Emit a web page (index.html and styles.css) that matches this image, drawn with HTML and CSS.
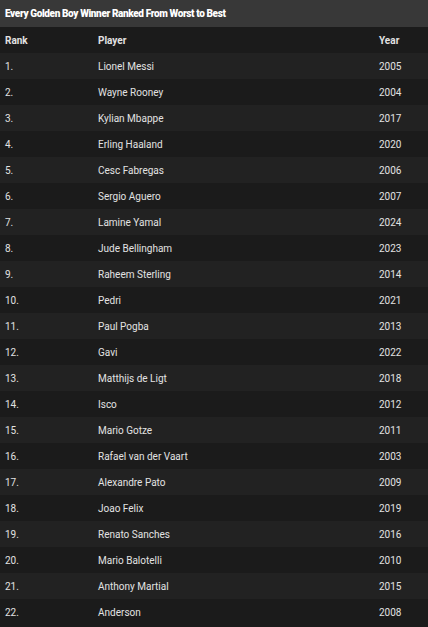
FILE: index.html
```html
<!DOCTYPE html>
<html>
<head>
<meta charset="utf-8">
<link rel="stylesheet" href="styles.css">
</head>
<body>
<div class="table">
  <div class="title">Every Golden Boy Winner Ranked From Worst to Best</div>
  <div class="row head"><span>Rank</span><span>Player</span><span>Year</span></div>
  <div class="row"><span>1.</span><span>Lionel Messi</span><span>2005</span></div>
  <div class="row"><span>2.</span><span>Wayne Rooney</span><span>2004</span></div>
  <div class="row"><span>3.</span><span>Kylian Mbappe</span><span>2017</span></div>
  <div class="row"><span>4.</span><span>Erling Haaland</span><span>2020</span></div>
  <div class="row"><span>5.</span><span>Cesc Fabregas</span><span>2006</span></div>
  <div class="row"><span>6.</span><span>Sergio Aguero</span><span>2007</span></div>
  <div class="row"><span>7.</span><span>Lamine Yamal</span><span>2024</span></div>
  <div class="row"><span>8.</span><span>Jude Bellingham</span><span>2023</span></div>
  <div class="row"><span>9.</span><span>Raheem Sterling</span><span>2014</span></div>
  <div class="row"><span>10.</span><span>Pedri</span><span>2021</span></div>
  <div class="row"><span>11.</span><span>Paul Pogba</span><span>2013</span></div>
  <div class="row"><span>12.</span><span>Gavi</span><span>2022</span></div>
  <div class="row"><span>13.</span><span>Matthijs de Ligt</span><span>2018</span></div>
  <div class="row"><span>14.</span><span>Isco</span><span>2012</span></div>
  <div class="row"><span>15.</span><span>Mario Gotze</span><span>2011</span></div>
  <div class="row"><span>16.</span><span>Rafael van der Vaart</span><span>2003</span></div>
  <div class="row"><span>17.</span><span>Alexandre Pato</span><span>2009</span></div>
  <div class="row"><span>18.</span><span>Joao Felix</span><span>2019</span></div>
  <div class="row"><span>19.</span><span>Renato Sanches</span><span>2016</span></div>
  <div class="row"><span>20.</span><span>Mario Balotelli</span><span>2010</span></div>
  <div class="row"><span>21.</span><span>Anthony Martial</span><span>2015</span></div>
  <div class="row"><span>22.</span><span>Anderson</span><span>2008</span></div>
</div>
</body>
</html>
```
FILE: styles.css
```css
html, body {
  margin: 0;
  padding: 0;
  background: #1b1b1b;
}
.table {
  width: 428px;
  font-family: Roboto, "Liberation Sans", sans-serif;
  font-size: 10px;
  color: #e2e2e2;
}
.title {
  height: 27px;
  box-sizing: border-box;
  padding-left: 5px;
  display: flex;
  align-items: center;
  background: #383838;
  color: #ffffff;
  font-weight: 900;
  font-size: 10px;
  letter-spacing: -0.38px;
}
.row {
  display: grid;
  grid-template-columns: 93px 281px 1fr;
  height: 26px;
  align-items: center;
  padding-left: 5px;
  background: #1b1b1b;
}
.row:nth-child(odd) {
  background: #222222;
}
.row.head {
  background: #1b1b1b;
  font-weight: 700;
}
```
